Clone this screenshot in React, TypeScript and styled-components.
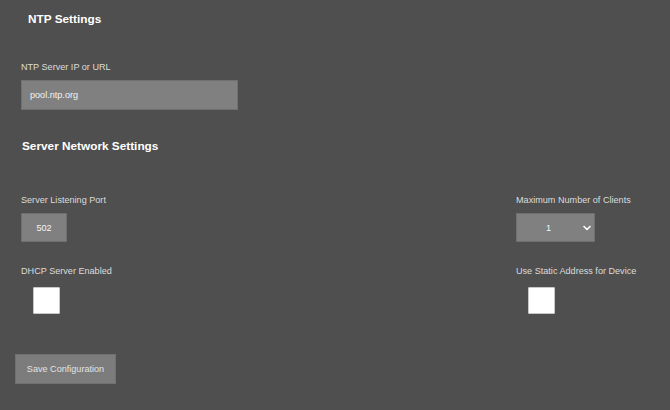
import React from 'react';
import styled, { createGlobalStyle } from 'styled-components';

const GlobalStyle = createGlobalStyle`
  html, body {
    margin: 0;
    padding: 0;
    background: #4f4f4f;
    font-family: "Liberation Sans", Arial, sans-serif;
  }
`;

const Page = styled.div`
  width: 670px;
  height: 410px;
  box-sizing: border-box;
  padding: 12px 0 0 21px;
  background: #4f4f4f;
`;

const Heading = styled.h2<{ $indent?: number; $top?: number }>`
  margin: ${(p) => p.$top ?? 0}px 0 0 ${(p) => p.$indent ?? 0}px;
  font-size: 11.8px;
  line-height: 14px;
  font-weight: 700;
  color: #ffffff;
`;

const Label = styled.label<{ $top: number }>`
  display: block;
  margin-top: ${(p) => p.$top}px;
  font-size: 9.1px;
  line-height: 11px;
  color: #dcdcdc;
`;

const TextInput = styled.input<{ $width: number; $center?: boolean }>`
  display: block;
  box-sizing: border-box;
  width: ${(p) => p.$width}px;
  height: ${(p) => (p.$center ? 29 : 30)}px;
  margin-top: 7px;
  padding: 0 8px;
  border: 1px solid #707070;
  background: #808080;
  color: #f4f4f4;
  font-family: inherit;
  font-size: 9.1px;
  text-align: ${(p) => (p.$center ? 'center' : 'left')};
  outline: none;
`;

const Columns = styled.div`
  display: grid;
  grid-template-columns: 495px 1fr;
`;

const Field = styled.div``;

const SelectWrap = styled.div`
  position: relative;
  width: 79px;
  margin-top: 7px;
`;

const Select = styled.select`
  display: block;
  box-sizing: border-box;
  width: 79px;
  height: 29px;
  appearance: none;
  border: 1px solid #707070;
  background: #808080;
  color: #f4f4f4;
  font-family: inherit;
  font-size: 9.1px;
  text-align: center;
  text-align-last: center;
  padding: 0 14px 0 0;
  outline: none;
`;

const Chevron = styled.svg`
  position: absolute;
  right: 4px;
  top: 12px;
  width: 8px;
  height: 6px;
  pointer-events: none;
`;

const Check = styled.input`
  display: block;
  appearance: none;
  box-sizing: border-box;
  width: 27px;
  height: 27px;
  margin: 10px 0 0 12px;
  background: #ffffff;
  border: 1px solid #c8c8c8;
  border-radius: 1px;
`;

const SaveButton = styled.button`
  display: block;
  box-sizing: border-box;
  width: 101px;
  height: 30px;
  margin: 40px 0 0 -6px;
  border: 1px solid #707070;
  background: #7c7c7c;
  color: #e2e2e2;
  font-family: inherit;
  font-size: 9.1px;
  padding: 0;
`;

export default function App() {
  return (
    <Page>
      <GlobalStyle />
      <Heading $indent={7}>NTP Settings</Heading>

      <Label $top={36}>NTP Server IP or URL</Label>
      <TextInput $width={217} defaultValue="pool.ntp.org" />

      <Heading $indent={1} $top={29}>Server Network Settings</Heading>

      <Columns>
        <Field>
          <Label $top={42}>Server Listening Port</Label>
          <TextInput $width={46} $center defaultValue="502" />
        </Field>
        <Field>
          <Label $top={42}>Maximum Number of Clients</Label>
          <SelectWrap>
            <Select defaultValue="1">
              <option value="1">1</option>
              <option value="2">2</option>
              <option value="3">3</option>
            </Select>
            <Chevron viewBox="0 0 8 6">
              <path d="M1 1.5 L4 4.5 L7 1.5" fill="none" stroke="#ffffff" strokeWidth="1.6" strokeLinecap="round" strokeLinejoin="round" />
            </Chevron>
          </SelectWrap>
        </Field>
        <Field>
          <Label $top={24}>DHCP Server Enabled</Label>
          <Check type="checkbox" />
        </Field>
        <Field>
          <Label $top={24}>Use Static Address for Device</Label>
          <Check type="checkbox" />
        </Field>
      </Columns>

      <SaveButton>Save Configuration</SaveButton>
    </Page>
  );
}
